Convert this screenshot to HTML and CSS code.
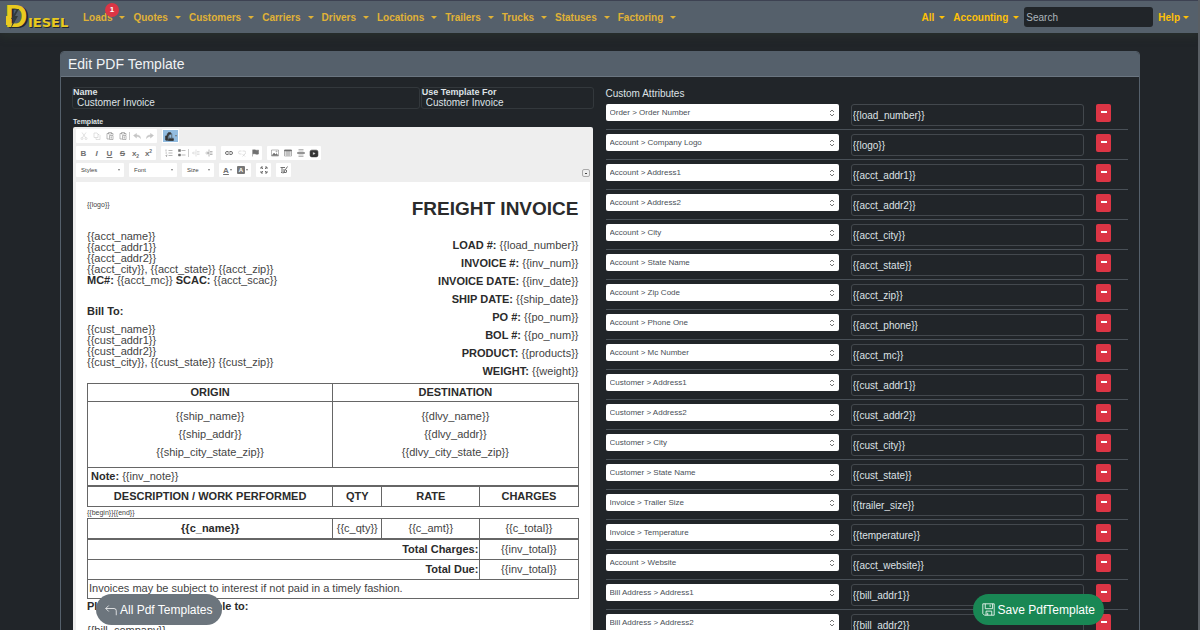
FILE: index.html
```html
<!DOCTYPE html>
<html lang="en">
<head>
    <meta charset="UTF-8">
    <meta name="viewport" content="width=device-width, initial-scale=1.0">
    <title>Edit PDF Template</title>
    <link rel="stylesheet" href="styles.css">
</head>
<body>
    <!-- toolbar icons -->
    <svg class="sprite" aria-hidden="true">
        <symbol id="cut" viewBox="0 0 16 16"><path d="M4 1l7 10M12 1L5 11"/><circle cx="4" cy="13" r="2"/><circle cx="12" cy="13" r="2"/></symbol>
        <symbol id="copy" viewBox="0 0 16 16"><path d="M2 2h6l2 2v7H2zM6 11v4h8V7l-2-2h-2"/></symbol>
        <symbol id="paste" viewBox="0 0 16 16"><path d="M5 3H2v11h4M11 3h3v3M5 1h6v3H5zM7 7h7v8H7zM9 10h3M9 12h3"/></symbol>
        <symbol id="undo" viewBox="0 0 16 16"><path class="solid" d="M7 3v3c5 0 8 2 8 7-2-3-4-4-8-4v3L1 7z"/></symbol>
        <symbol id="redo" viewBox="0 0 16 16"><path class="solid" d="M9 3v3c-5 0-8 2-8 7 2-3 4-4 8-4v3l6-5z"/></symbol>
        <symbol id="ol" viewBox="0 0 16 16"><path d="M7 3h8M7 8h8M7 13h8M2 1v4M1 8h3M1 13h3v-2M2 15h2"/></symbol>
        <symbol id="ul" viewBox="0 0 16 16"><path d="M7 3h8M7 12h8"/><path class="solid" d="M1 1h4v4H1zM1 10h4v4H1z"/></symbol>
        <symbol id="outdent" viewBox="0 0 16 16"><path d="M8 1v14M10 5h5M10 8h5M10 11h5M1 8h6M4 5L1 8l3 3"/></symbol>
        <symbol id="indent" viewBox="0 0 16 16"><path d="M8 1v14M10 5h5M10 8h5M10 11h5M1 8h6M4 5l3 3-3 3"/></symbol>
        <symbol id="link" viewBox="0 0 16 16"><path d="M7 5H4a3 3 0 0 0 0 6h3M9 5h3a3 3 0 0 1 0 6H9M5 8h6" stroke-width="2"/></symbol>
        <symbol id="unlink" viewBox="0 0 16 16"><path d="M7 4H4a3 3 0 0 0 0 6h3M9 4h3a3 3 0 0 1 1 6M9 10l5 5M14 10l-5 5"/></symbol>
        <symbol id="flag" viewBox="0 0 16 16"><path d="M3 1v14"/><path class="solid" d="M4 2c4-2 6 2 11 0v8c-5 2-7-2-11 0z"/></symbol>
        <symbol id="image" viewBox="0 0 16 16"><path d="M1 2h14v12H1z"/><path class="solid" d="M2 13l4-5 3 3 2-2 3 4z"/><circle cx="11" cy="5" r="1"/></symbol>
        <symbol id="table" viewBox="0 0 16 16"><path d="M1 2h14v12H1zM1 6h14M1 10h14M6 4v10M10 4v10"/><path class="solid" d="M1 2h14v2H1z"/></symbol>
        <symbol id="rule" viewBox="0 0 16 16"><path d="M3 1h10M3 4h10M3 12h10M3 15h10"/><path class="solid" d="M1 7h14v2H1z"/></symbol>
        <symbol id="video" viewBox="0 0 16 16"><rect class="solid" x="1" y="2" width="14" height="12" rx="3"/><path class="play" d="M6 5l5 3-5 3z"/></symbol>
        <symbol id="maximize" viewBox="0 0 16 16"><path d="M2 6V2h4M10 2h4v4M14 10v4h-4M6 14H2v-4M2 2l4 4M14 2l-4 4M14 14l-4-4M2 14l4-4" stroke-width="2"/></symbol>
        <symbol id="blocks" viewBox="0 0 16 16"><path d="M1 3h9M4 3v10M2 13h3M8 6v7h4M15 1L6 15M13 8v5" stroke-width="2"/></symbol>
        <symbol id="snippet" viewBox="0 0 16 16"><path d="M5 7H2v8h12v-5M7 3h5v8H7z"/><path class="solid" d="M1 7h4v7H1zM6 1h4v3H6zM4 3h2v4H4zM6 12h9v3H6z"/></symbol>
    </svg>

    <nav class="navbar">
        <a class="brand" href="#" aria-label="Diesel">
            <svg width="72" height="32" viewBox="0 0 72 32">
                <g class="brand-shadow">
                    <text class="brand-d" x="2" y="27">D</text>
                    <text class="brand-rest" x="24" y="27">IESEL</text>
                </g>
                <g class="brand-face">
                    <text class="brand-d" x="0" y="26">D</text>
                    <text class="brand-rest" x="23" y="26">IESEL</text>
                    <path d="M1 15h3v9H1z"/>
                </g>
                <path class="brand-bolt" d="M12 8L6 18h3L5 29l8-14h-3l4-7z"/>
            </svg>
        </a>
        <div class="menu">
            <a class="menu-link" href="#">Loads<span class="badge">1</span></a>
            <a class="menu-link" href="#">Quotes</a>
            <a class="menu-link" href="#">Customers</a>
            <a class="menu-link" href="#">Carriers</a>
            <a class="menu-link" href="#">Drivers</a>
            <a class="menu-link" href="#">Locations</a>
            <a class="menu-link" href="#">Trailers</a>
            <a class="menu-link" href="#">Trucks</a>
            <a class="menu-link" href="#">Statuses</a>
            <a class="menu-link" href="#">Factoring</a>
        </div>
        <div class="menu-right">
            <a class="menu-link" href="#">All</a>
            <a class="menu-link" href="#">Accounting</a>
            <input class="search" type="search" placeholder="Search" aria-label="Search">
            <a class="menu-link help" href="#">Help</a>
        </div>
    </nav>

    <main class="card">
        <h1 class="card-header">Edit PDF Template</h1>
        <div class="card-body">
            <section class="template">
                <div class="fields">
                    <div class="field">
                        <label for="name">Name</label>
                        <input id="name" type="text" value="Customer Invoice">
                    </div>
                    <div class="field">
                        <label for="usedFor">Use Template For</label>
                        <select id="usedFor"><option>Customer Invoice</option></select>
                    </div>
                </div>
                <h2 class="template-label">Template</h2>

                <div class="editor">
                    <div class="toolbar">
                        <div class="tool-row">
                            <div class="tools">
                                <button class="off" aria-label="Cut"><svg><use href="#cut"/></svg></button>
                                <button class="off" aria-label="Copy"><svg><use href="#copy"/></svg></button>
                                <button aria-label="Paste"><svg><use href="#paste"/></svg></button>
                                <button aria-label="Paste as text"><svg><use href="#paste"/></svg></button>
                                <span class="sep"></span>
                                <button class="off" aria-label="Undo"><svg><use href="#undo"/></svg></button>
                                <button class="off" aria-label="Redo"><svg><use href="#redo"/></svg></button>
                            </div>
                            <div class="tools">
                                <button class="active drop" aria-label="Insert field"><svg><use href="#snippet"/></svg></button>
                            </div>
                        </div>
                        <div class="tool-row">
                            <div class="tools">
                                <button><b>B</b></button>
                                <button><i>I</i></button>
                                <button><u>U</u></button>
                                <button><s>S</s></button>
                                <button>x<sub>2</sub></button>
                                <button>x<sup>2</sup></button>
                            </div>
                            <div class="tools">
                                <button aria-label="Numbered list"><svg><use href="#ol"/></svg></button>
                                <button aria-label="Bulleted list"><svg><use href="#ul"/></svg></button>
                                <span class="sep"></span>
                                <button class="off" aria-label="Outdent"><svg><use href="#outdent"/></svg></button>
                                <button aria-label="Indent"><svg><use href="#indent"/></svg></button>
                            </div>
                            <div class="tools">
                                <button aria-label="Link"><svg><use href="#link"/></svg></button>
                                <button class="off" aria-label="Unlink"><svg><use href="#unlink"/></svg></button>
                                <button aria-label="Anchor"><svg><use href="#flag"/></svg></button>
                            </div>
                            <div class="tools">
                                <button aria-label="Image"><svg><use href="#image"/></svg></button>
                                <button aria-label="Table"><svg><use href="#table"/></svg></button>
                                <button aria-label="Horizontal line"><svg><use href="#rule"/></svg></button>
                                <button aria-label="Video"><svg class="dark"><use href="#video"/></svg></button>
                            </div>
                        </div>
                        <div class="tool-row">
                            <button class="combo wide">Styles</button>
                            <button class="combo wide">Font</button>
                            <button class="combo">Size</button>
                            <div class="tools">
                                <button class="drop" aria-label="Text color"><u>A</u></button>
                                <button class="drop" aria-label="Background color"><span class="inverse">A</span></button>
                            </div>
                            <div class="tools"><button aria-label="Maximize"><svg><use href="#maximize"/></svg></button></div>
                            <div class="tools"><button aria-label="Show blocks"><svg><use href="#blocks"/></svg></button></div>
                            <button class="collapse" aria-label="Collapse toolbar"></button>
                        </div>
                    </div>

                    <div class="document">
                        <div class="doc-head">
                            <div>
                                <p class="tiny">{{logo}}</p>
                                <p class="account">{{acct_name}}<br>{{acct_addr1}}<br>{{acct_addr2}}<br>{{acct_city}}, {{acct_state}} {{acct_zip}}<br><b>MC#:</b> {{acct_mc}} <b>SCAC:</b> {{acct_scac}}</p>
                                <p class="bill-to"><b>Bill To:</b></p>
                                <p>{{cust_name}}<br>{{cust_addr1}}<br>{{cust_addr2}}<br>{{cust_city}}, {{cust_state}} {{cust_zip}}</p>
                            </div>
                            <div class="doc-info">
                                <h3>FREIGHT INVOICE</h3>
                                <p><b>LOAD #:</b> {{load_number}}</p>
                                <p><b>INVOICE #:</b> {{inv_num}}</p>
                                <p><b>INVOICE DATE:</b> {{inv_date}}</p>
                                <p><b>SHIP DATE:</b> {{ship_date}}</p>
                                <p><b>PO #:</b> {{po_num}}</p>
                                <p><b>BOL #:</b> {{po_num}}</p>
                                <p><b>PRODUCT:</b> {{products}}</p>
                                <p><b>WEIGHT:</b> {{weight}}</p>
                            </div>
                        </div>

                        <table class="stops">
                            <tr><th>ORIGIN</th><th>DESTINATION</th></tr>
                            <tr class="stop">
                                <td>{{ship_name}}<br>{{ship_addr}}<br>{{ship_city_state_zip}}</td>
                                <td>{{dlvy_name}}<br>{{dlvy_addr}}<br>{{dlvy_city_state_zip}}</td>
                            </tr>
                            <tr><td class="note" colspan="2"><b>Note:</b> {{inv_note}}</td></tr>
                        </table>
                        <table class="charges">
                            <tr><th class="half">DESCRIPTION / WORK PERFORMED</th><th class="tenth">QTY</th><th>RATE</th><th>CHARGES</th></tr>
                        </table>
                        <p class="tiny loop">{{begin}}{{end}}</p>
                        <table class="charges">
                            <tr><th class="half">{{c_name}}</th><td class="tenth">{{c_qty}}</td><td>{{c_amt}}</td><td>{{c_total}}</td></tr>
                        </table>
                        <table class="charges">
                            <tr><th class="total">Total Charges:</th><td>{{inv_total}}</td></tr>
                            <tr><th class="total">Total Due:</th><td>{{inv_total}}</td></tr>
                            <tr><td class="terms" colspan="2">Invoices may be subject to interest if not paid in a timely fashion.</td></tr>
                        </table>
                        <p class="payable"><b>Please make check payable to:</b></p>
                        <p>{{bill_company}}</p>
                    </div>
                </div>
            </section>

            <section class="attributes">
                <h2>Custom Attributes</h2>
                <div id="attributeRows"></div>
            </section>
        </div>
    </main>

    <a class="pill back" href="#">
        <svg width="12" height="12" viewBox="0 0 16 16"><path d="M5 2L1 6l4 4M1 6h11a3 3 0 0 1 3 3v6"/></svg>
        All Pdf Templates
    </a>
    <button class="pill save">
        <svg width="13" height="13" viewBox="0 0 16 16"><path d="M1 1h14v14H3l-2-2zM4 1v6h9V1M5 15v-5h7v5M10 2v3M7 12v3"/></svg>
        Save PdfTemplate
    </button>

    <script>
        const attributes = [
            ["Order > Order Number", "load_number"],
            ["Account > Company Logo", "logo"],
            ["Account > Address1", "acct_addr1"],
            ["Account > Address2", "acct_addr2"],
            ["Account > City", "acct_city"],
            ["Account > State Name", "acct_state"],
            ["Account > Zip Code", "acct_zip"],
            ["Account > Phone One", "acct_phone"],
            ["Account > Mc Number", "acct_mc"],
            ["Customer > Address1", "cust_addr1"],
            ["Customer > Address2", "cust_addr2"],
            ["Customer > City", "cust_city"],
            ["Customer > State Name", "cust_state"],
            ["Invoice > Trailer Size", "trailer_size"],
            ["Invoice > Temperature", "temperature"],
            ["Account > Website", "acct_website"],
            ["Bill Address > Address1", "bill_addr1"],
            ["Bill Address > Address2", "bill_addr2"]
        ];

        // One row per attribute: source field, placeholder tag, remove button
        const rows = document.getElementById("attributeRows");
        attributes.forEach(([source, tag]) => {
            const row = document.createElement("div");
            row.className = "attribute";
            row.innerHTML = `
                <select aria-label="Source of ${tag}"><option>${source}</option></select>
                <input type="text" value="{{${tag}}}" aria-label="Tag for ${tag}">
                <button class="remove" aria-label="Remove ${tag}"></button>`;
            rows.appendChild(row);
        });
    </script>
</body>
</html>
```

FILE: styles.css
```css
* {
    box-sizing: border-box;
}

body {
    margin: 0;
    height: 100vh;
    overflow: hidden;
    background-color: #212529;
    color: #dee2e6;
    font-family: "Liberation Sans", Arial, sans-serif;
    font-size: 10px;
}

/* thin scroll track over the right edge */
body::after {
    content: "";
    position: fixed;
    top: 0;
    right: 0;
    bottom: 0;
    width: 2px;
    background-color: #5a5f64;
}

h1, h2, h3, p {
    margin: 0;
    font-weight: normal;
}

button, input, select {
    margin: 0;
    padding: 0;
    border: 0;
    font-family: inherit;
    font-size: inherit;
    color: inherit;
    appearance: none;
}

.sprite {
    display: none;
}

/* Navbar */
.navbar {
    display: flex;
    align-items: center;
    height: 33px;
    padding: 0 11px 0 5px;
    background-color: #55606b;
    border-top: 1px solid #3d4252;
    box-shadow: 0 4px 8px rgba(50, 60, 50, 0.4);
}

.brand {
    display: flex;
    margin-right: 6px;
}

.brand-d {
    font-size: 31px;
    font-weight: bold;
}

.brand-rest {
    font-family: "DejaVu Sans", sans-serif;
    font-size: 13px;
    font-weight: bold;
}

.brand-shadow {
    fill: #23282c;
}

.brand-face {
    fill: #e9ca20;
}

.brand-bolt {
    fill: #333a3c;
}

.menu, .menu-right {
    display: flex;
    align-items: center;
}

.menu {
    flex: 1;
    gap: 8px;
}

.menu-right {
    gap: 8px;
}

.menu-link {
    position: relative;
    display: flex;
    align-items: center;
    gap: 7px;
    color: #e0b236;
    font-weight: bold;
    text-decoration: none;
}

.menu-link::after {
    content: "";
    border: 3px solid transparent;
    border-top-color: currentColor;
    border-bottom: 0;
}

.menu-right .menu-link {
    gap: 5px;
    color: #ffc107;
}

.menu-right .help {
    gap: 3px;
}

.menu-right .search {
    margin: 0 -3px;
}

.badge {
    position: absolute;
    top: -9px;
    left: 22px;
    width: 14px;
    border-radius: 7px;
    background-color: #dc3545;
    color: white;
    font-size: 8px;
    line-height: 14px;
    text-align: center;
}

.search {
    width: 129px;
    height: 20px;
    padding: 0 2px;
    border-radius: 3px;
    background-color: #212529;
    font-size: 10px;
}

.search::placeholder {
    color: #adb5bd;
}

/* Card */
.card {
    margin: 18px 5% 0;
    border: 1px solid #55606b;
    border-radius: 4px;
}

.card-header {
    padding: 0 7px;
    background-color: #55606b;
    border-bottom: 1px solid #6b7681;
    border-radius: 3px 3px 0 0;
    color: #f1f3f5;
    font-size: 14px;
    line-height: 24px;
}

.card-body {
    display: grid;
    grid-template-columns: 1fr 1fr;
    gap: 11px;
    padding: 10px 11px;
}

.fields {
    display: grid;
    grid-template-columns: 2fr 1fr;
    gap: 1px;
}

.field {
    display: flex;
    flex-direction: column;
    height: 22px;
    border: 1px solid #33383c;
    border-radius: 3px;
}

.field label {
    font-size: 9px;
    font-weight: bold;
    line-height: 9px;
}

.field input, .field select {
    height: 12px;
    padding: 0 4px;
    background: none;
}

.template-label {
    margin: 9px 1px 0;
    font-size: 7px;
    font-weight: bold;
    line-height: 8px;
}

/* Editor */
.editor {
    margin: 1px 2px 0 1px;
    background-color: #eeeeee;
    border-radius: 2px;
    color: #444444;
}

.editor b, .editor th, .editor h3 {
    color: #2b2b2b;
}

.toolbar {
    display: flex;
    flex-direction: column;
    gap: 3px;
    padding: 2px 3px 5px;
}

.tool-row {
    display: flex;
    gap: 5px;
}

.tools {
    display: flex;
    padding: 0 1px;
    background-color: white;
    border-radius: 1px;
}

.tools button {
    display: flex;
    align-items: center;
    justify-content: center;
    width: 13px;
    height: 14px;
    background: none;
    color: #707070;
    font-size: 8px;
    font-weight: bold;
}

.tools b {
    color: inherit;
}

.tools sub, .tools sup {
    font-size: 5px;
}

.tools sub {
    margin-top: 5px;
}

.tools sup {
    margin-bottom: 5px;
}

.tools svg {
    width: 8px;
    height: 8px;
    fill: none;
    stroke: currentColor;
    stroke-width: 1;
}

.tools .dark {
    width: 10px;
    height: 9px;
    color: #333333;
}

.solid {
    fill: currentColor;
}

.play {
    fill: white;
}

.tools .off {
    opacity: 0.4;
}

.tools .drop {
    width: 15px;
    gap: 1px;
}

.drop::after, .combo::after {
    content: "";
    border: 1px solid transparent;
    border-top: 2px solid #777777;
    border-bottom: 0;
}

.tools .active {
    margin: 1px 0;
    height: 12px;
    background-color: #92bce0;
    color: #333333;
}

.tools .active svg {
    width: 9px;
    height: 9px;
}

.inverse {
    padding: 0 2px;
    background-color: #777777;
    border-radius: 1px;
    color: white;
    font-size: 6px;
    line-height: 8px;
}

.sep {
    width: 1px;
    margin: 3px 0;
    background-color: #cccccc;
}

.combo {
    display: flex;
    align-items: center;
    justify-content: space-between;
    width: 32px;
    height: 14px;
    padding: 0 4px 0 5px;
    background-color: white;
    border-radius: 1px;
    font-size: 6px;
}

.combo.wide {
    width: 48px;
}

.collapse {
    align-self: flex-end;
    width: 8px;
    height: 8px;
    margin-left: auto;
    border: 1px solid #aaaaaa;
    border-radius: 2px;
    background: linear-gradient(#444444, #444444) center / 2px 1px no-repeat;
}

/* Invoice document */
.document {
    margin: 0 3px;
    padding: 15px 11px;
    background-color: white;
    font-size: 11px;
    line-height: 11px;
}

.doc-head {
    display: flex;
    justify-content: space-between;
    margin-bottom: 3px;
}

.tiny {
    font-size: 7px;
    padding-top: 2px;
}

.account {
    margin-top: 21px;
}

.bill-to {
    margin: 20px 0 7px;
}

.doc-info {
    text-align: right;
    line-height: 18px;
}

.doc-info h3 {
    margin-bottom: 15px;
    font-size: 19px;
    font-weight: bold;
    line-height: 24px;
}

.document table {
    width: 100%;
    border-collapse: collapse;
    table-layout: fixed;
    text-align: center;
}

.document th, .document td {
    height: 18px;
    padding: 0 0 1px;
    border: 1px solid #666666;
}

.document .charges th, .document .charges td {
    height: 20px;
}

.document .stop td {
    height: 66px;
    line-height: 18px;
}

.half {
    width: 50%;
}

.tenth {
    width: 10%;
}

.document .total {
    width: 80%;
    padding-right: 1px;
    text-align: right;
}

.document .note {
    padding-left: 3px;
    text-align: left;
}

.document .charges .terms {
    height: 19px;
    padding-left: 1px;
    text-align: left;
}

.document .loop {
    padding-top: 0;
}

.payable {
    margin: 2px 0 13px;
}

/* Custom attributes */
.attributes h2 {
    margin: 1px 0 4px;
    font-size: 10px;
    line-height: 12px;
}

.attribute {
    display: grid;
    grid-template-columns: 1fr 1fr 15px;
    gap: 12px;
    align-items: start;
    height: 26px;
    margin-bottom: 4px;
    padding-right: 17px;
    border-bottom: 1px solid #495057;
}

.attribute select {
    height: 17px;
    padding: 0 4px;
    border-radius: 2px;
    background: white url("data:image/svg+xml,%3Csvg xmlns='http://www.w3.org/2000/svg' viewBox='0 0 6 8'%3E%3Cpath d='M1 3l2-2 2 2M1 5l2 2 2-2' fill='none' stroke='%23777'/%3E%3C/svg%3E") right 4px center / 6px 8px no-repeat;
    color: #495057;
    font-size: 8px;
}

.attribute input {
    min-width: 0;
    height: 22px;
    padding: 0 1px;
    border: 1px solid #43484d;
    border-radius: 3px;
    background: none;
}

.remove {
    height: 18px;
    border-radius: 2px;
    background: #dc3545 linear-gradient(white, white) center 7px / 6px 2px no-repeat;
}

/* Floating actions */
.pill {
    position: fixed;
    bottom: 5px;
    display: flex;
    align-items: center;
    gap: 3px;
    height: 31px;
    padding: 0 9px;
    border-radius: 16px;
    color: white;
    font-size: 12px;
    text-decoration: none;
}

.pill svg {
    fill: none;
    stroke: currentColor;
}

.back {
    left: 8%;
    background-color: #6c757d;
}

.save {
    right: 8%;
    background-color: #198754;
}
```
